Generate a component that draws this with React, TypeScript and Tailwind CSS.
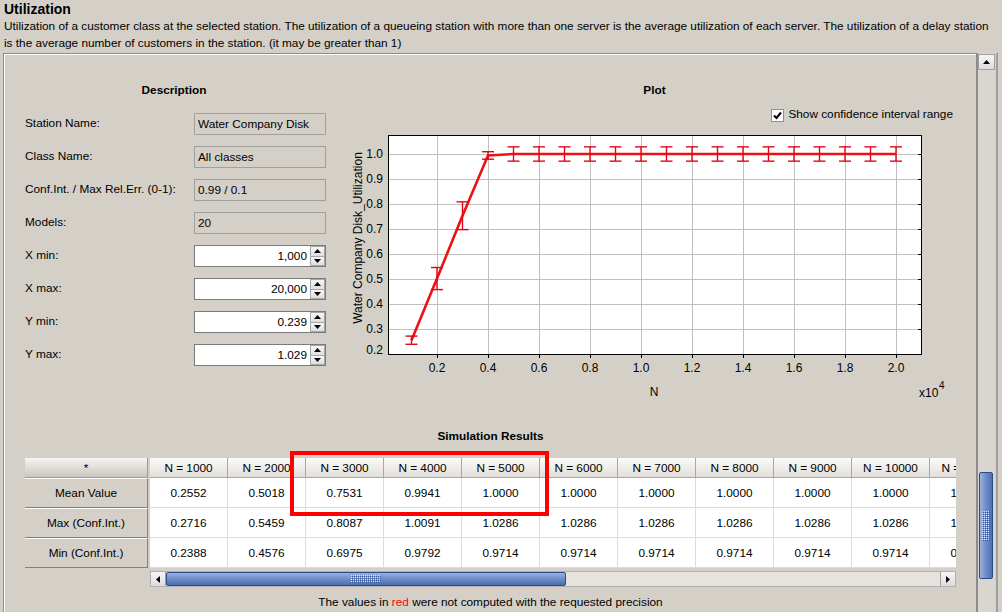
import React from 'react';

const rows = [
  { label: 'Station Name:', value: 'Water Company Disk', edit: false },
  { label: 'Class Name:', value: 'All classes', edit: false },
  { label: 'Conf.Int. / Max Rel.Err. (0-1):', value: '0.99 / 0.1', edit: false },
  { label: 'Models:', value: '20', edit: false },
  { label: 'X min:', value: '1,000', edit: true },
  { label: 'X max:', value: '20,000', edit: true },
  { label: 'Y min:', value: '0.239', edit: true },
  { label: 'Y max:', value: '1.029', edit: true },
];

const ns = Array.from({ length: 20 }, (_, i) => (i + 1) * 1000);
const mean = ns.map((_, i) => [0.2552, 0.5018, 0.7531, 0.9941][i] ?? 1.0);
const hi = ns.map((_, i) => [0.2716, 0.5459, 0.8087, 1.0091][i] ?? 1.0286);
const lo = ns.map((_, i) => [0.2388, 0.4576, 0.6975, 0.9792][i] ?? 0.9714);

const Arrow = ({ dir }: { dir: 'up' | 'down' | 'left' | 'right' }) => {
  const d = {
    up: 'M0 4 L3.5 0 L7 4 Z',
    down: 'M0 0 L7 0 L3.5 4 Z',
    left: 'M4 0 L4 7 L0 3.5 Z',
    right: 'M0 0 L4 3.5 L0 7 Z',
  }[dir];
  const vert = dir === 'up' || dir === 'down';
  return (
    <svg width={vert ? 7 : 4} height={vert ? 4 : 7} className="block">
      <path d={d} fill="#000" />
    </svg>
  );
};

const Grip = ({ w, h }: { w: number; h: number }) => (
  <svg width={w} height={h} className="block">
    <defs>
      <pattern id={`g${w}${h}`} width="2" height="2" patternUnits="userSpaceOnUse">
        <rect width="1" height="1" fill="#d8e2f6" />
        <rect x="1" y="1" width="1" height="1" fill="#3d5e9e" />
      </pattern>
    </defs>
    <rect width={w} height={h} fill={`url(#g${w}${h})`} />
  </svg>
);

function Spinner({ value }: { value: string }) {
  return (
    <div className="flex h-[22px] w-[132px] border border-[#7a7a7a] bg-white">
      <div className="flex-1 pr-[3px] text-right leading-[20px]">{value}</div>
      <div className="flex w-[15px] flex-col">
        <div className="flex flex-1 items-center justify-center border border-[#a8a8a8] bg-gradient-to-b from-[#f6f6f6] to-[#dedede]">
          <Arrow dir="up" />
        </div>
        <div className="flex flex-1 items-center justify-center border border-t-0 border-[#a8a8a8] bg-gradient-to-b from-[#f6f6f6] to-[#dedede]">
          <Arrow dir="down" />
        </div>
      </div>
    </div>
  );
}

function Chart() {
  const X = (v: number) => 97 + (v - 0.2) * 255;
  const Y = (v: number) => 24 + (1 - v) * 250;
  const xt = [0.2, 0.4, 0.6, 0.8, 1.0, 1.2, 1.4, 1.6, 1.8, 2.0];
  const yt = [0.2, 0.3, 0.4, 0.5, 0.6, 0.7, 0.8, 0.9, 1.0];
  const px = (v: number) => Math.round(v) + 0.5;
  const red = '#e3061b';
  const pts = ns.map((n, i) => `${X(n / 10000)},${Y(mean[i])}`).join(' ');
  return (
    <svg width={623} height={272} className="block" fontFamily="'Liberation Sans', Arial, sans-serif" fontSize={12}>
      <rect x={48.5} y={5.5} width={533} height={219} fill="#fff" />
      {xt.map((v) => (
        <line key={`x${v}`} x1={px(X(v))} x2={px(X(v))} y1={6} y2={224} stroke="#c0c0c0" />
      ))}
      {yt.map((v) => (
        <line key={`y${v}`} x1={49} x2={581} y1={px(Y(v))} y2={px(Y(v))} stroke="#c0c0c0" />
      ))}
      {xt.map((v) => (
        <line key={`tx${v}`} x1={px(X(v))} x2={px(X(v))} y1={224} y2={228} stroke="#000" />
      ))}
      {yt.map((v) => (
        <line key={`ty${v}`} x1={578} x2={581} y1={px(Y(v))} y2={px(Y(v))} stroke="#000" />
      ))}
      <rect x={48.5} y={5.5} width={533} height={219} fill="none" stroke="#000" />
      <polyline points={pts} fill="none" stroke="#ee1111" strokeWidth={2.6} />
      {ns.map((n, i) => {
        const x = X(n / 10000);
        return (
          <g key={n} stroke={red} strokeWidth={1.4}>
            <line x1={x} x2={x} y1={Y(hi[i])} y2={Y(lo[i])} />
            <line x1={x - 6} x2={x + 6} y1={Y(hi[i])} y2={Y(hi[i])} />
            <line x1={x - 6} x2={x + 6} y1={Y(lo[i])} y2={Y(lo[i])} />
          </g>
        );
      })}
      {yt.map((v) => (
        <text key={`l${v}`} x={43} y={v === 0.2 ? 224 : Y(v) + 4} textAnchor="end" fill="#000">
          {v.toFixed(1)}
        </text>
      ))}
      {xt.map((v) => (
        <text key={`m${v}`} x={X(v)} y={242} textAnchor="middle" fill="#000">
          {v.toFixed(1)}
        </text>
      ))}
      <text x={0} y={0} transform="translate(22 108) rotate(-90)" textAnchor="middle" fill="#000">
        Water Company Disk_Utilization
      </text>
      <text x={314} y={266} textAnchor="middle" fill="#000">N</text>
      <text x={579} y={267} fill="#000">x10</text>
      <text x={599} y={259} fontSize={10} fill="#000">4</text>
    </svg>
  );
}

export default function App() {
  return (
    <div className="relative h-[612px] w-[1002px] overflow-hidden bg-[#d4d0c8] font-['Liberation_Sans',Arial,sans-serif] text-[11.8px] text-black">
      <div className="h-[53px] px-[4px] pt-[1px]">
        <div className="text-[14px] font-bold leading-[17px]">Utilization</div>
        <p className="whitespace-nowrap leading-[17px]">
          Utilization of a customer class at the selected station. The utilization of a queueing station with more than one server is the average utilization of each server. The utilization of a delay station
          <br />
          is the average number of customers in the station. (it may be greater than 1)
        </p>
      </div>

      <div className="ml-[3px] flex h-[559px]">
        <div className="w-[975px] border-l border-t border-r-2 border-[#8c8c8c]">
          <div className="h-full border-l border-t border-white">
            <div className="flex">
              <div className="w-[338px] pt-[27px]">
                <div className="h-[16px] text-center font-bold leading-[16px]">Description</div>
                <div className="mt-[15px] flex flex-col gap-[11px] pl-[20px]">
                  {rows.map((r) => (
                    <div key={r.label} className="flex h-[22px] items-center">
                      <div className="w-[169px] whitespace-nowrap">{r.label}</div>
                      {r.edit ? (
                        <Spinner value={r.value} />
                      ) : (
                        <div className="h-[22px] w-[132px] border border-[#a0a0a0] pl-[3px] leading-[20px]">{r.value}</div>
                      )}
                    </div>
                  ))}
                </div>
              </div>
              <div className="w-[623px] pt-[27px]">
                <div className="h-[16px] text-center font-bold leading-[16px]">Plot</div>
                <div className="mt-[9px] flex h-[16px] items-center justify-end gap-[4px] pr-[13px]">
                  <svg width="13" height="13" className="block">
                    <rect x="0.5" y="0.5" width="12" height="12" fill="#fff" stroke="#8e8f8f" />
                    <path d="M3 6.5 L5.5 9 L10 3.5" fill="none" stroke="#000" strokeWidth="2" />
                  </svg>
                  <span>Show confidence interval range</span>
                </div>
                <div className="mt-[7px] -ml-[3px]">
                  <Chart />
                </div>
              </div>
            </div>

            <div className="mt-[26px] w-[951px] pl-[20px]">
              <div className="h-[16px] text-center font-bold leading-[16px]">Simulation Results</div>
              <div className="relative mt-[14px] flex gap-[2px]">
                <div className="w-[123px]">
                  <div className="h-[20px] border-b border-r border-[#9a9a9a] bg-gradient-to-b from-[#f6f5f2] to-[#cbc7bf] text-center leading-[20px]">*</div>
                  {['Mean Value', 'Max (Conf.Int.)', 'Min (Conf.Int.)'].map((t) => (
                    <div key={t} className="h-[30px] border-b border-r border-t border-b-[#808080] border-r-[#808080] border-t-white bg-[#d4d0c8] text-center leading-[28px]">
                      {t}
                    </div>
                  ))}
                </div>
                <div className="w-[806px] overflow-hidden">
                  <div className="flex w-max">
                    {ns.slice(0, 11).map((n, i) => (
                      <div key={n} className="w-[78px] shrink-0">
                        <div className="h-[20px] whitespace-nowrap border-b border-r border-[#a8a8a8] bg-gradient-to-b from-[#fbfbfa] to-[#e2dfd9] text-center leading-[20px]">
                          N = {n}
                        </div>
                        {[mean, hi, lo].map((arr, j) => (
                          <div key={j} className="h-[30px] border-b border-r border-[#dcdcdc] bg-white text-center leading-[30px]">
                            {arr[i].toFixed(4)}
                          </div>
                        ))}
                      </div>
                    ))}
                  </div>
                </div>
                <div className="absolute left-[265px] top-[-7px] h-[65px] w-[259px] border-4 border-[#ff0000]" />
              </div>

              <div className="ml-[125px] mt-[3px] flex h-[16px] w-[806px] border border-[#b0b0b0] bg-[#e6e3de]">
                <div className="flex w-[15px] items-center justify-center border-r border-[#a0a0a0] bg-gradient-to-b from-[#f6f6f6] to-[#dcdcdc]">
                  <Arrow dir="left" />
                </div>
                <div className="flex w-[400px] items-center justify-center rounded-[2px] border border-[#2c4a88] bg-gradient-to-b from-[#9ab1dd] via-[#6e8cc8] to-[#4d6eb2]">
                  <Grip w={30} h={8} />
                </div>
                <div className="flex-1" />
                <div className="flex w-[15px] items-center justify-center border-l border-[#a0a0a0] bg-gradient-to-b from-[#f6f6f6] to-[#dcdcdc]">
                  <Arrow dir="right" />
                </div>
              </div>

              <div className="mt-[7px] h-[16px] text-center leading-[16px]">
                The values in <span className="text-[#ff0000]">red</span> were not computed with the requested precision
              </div>
            </div>
          </div>
        </div>

        <div className="flex w-[17px] flex-col bg-[#d9d6cf]">
          <div className="mt-[1px] flex h-[16px] items-center justify-center border border-[#a0a0a0] bg-gradient-to-b from-[#f6f6f6] to-[#dcdcdc]">
            <Arrow dir="up" />
          </div>
          <div className="ml-[1px] mt-[402px] flex h-[107px] w-[14px] items-center justify-center rounded-[2px] border border-[#2c4a88] bg-gradient-to-r from-[#9ab1dd] via-[#6e8cc8] to-[#4d6eb2]">
            <Grip w={8} h={30} />
          </div>
        </div>
        <div className="ml-[1px] w-[2px] bg-[#a0a0a0]" />
      </div>
    </div>
  );
}
